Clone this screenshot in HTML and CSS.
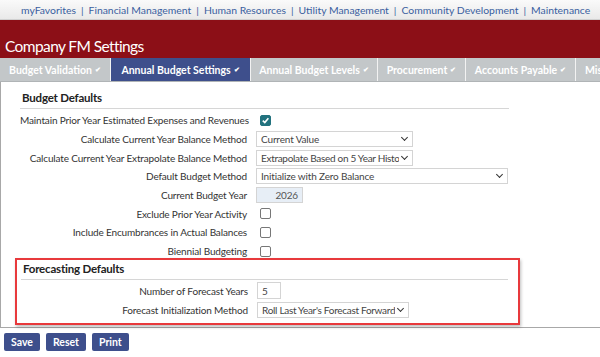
FILE: index.html
```html
<!DOCTYPE html>
<html lang="en">
<head>
    <meta charset="UTF-8">
    <title>Company FM Settings</title>
    <link rel="stylesheet" href="styles.css">
</head>
<body>
    <div class="top-nav">
        <a href="#">myFavorites</a><span class="sep">|</span>
        <a href="#">Financial Management</a><span class="sep">|</span>
        <a href="#">Human Resources</a><span class="sep">|</span>
        <a href="#">Utility Management</a><span class="sep">|</span>
        <a href="#">Community Development</a><span class="sep">|</span>
        <a href="#">Maintenance</a>
    </div>

    <div class="page-header">
        <h1>Company FM Settings</h1>
    </div>

    <div class="tabs">
        <div class="tab t1">Budget Validation <span class="tick">&#10004;</span></div>
        <div class="tab t2 active">Annual Budget Settings <span class="tick">&#10004;</span></div>
        <div class="tab t3">Annual Budget Levels <span class="tick">&#10004;</span></div>
        <div class="tab t4">Procurement <span class="tick">&#10004;</span></div>
        <div class="tab t5">Accounts Payable <span class="tick">&#10004;</span></div>
        <div class="tab t6">Miscellaneous</div>
    </div>

    <div class="content">
        <div class="section">
            <div class="section-title">Budget Defaults</div>
            <div class="row">
                <label>Maintain Prior Year Estimated Expenses and Revenues</label>
                <span class="check checked"><svg width="9" height="9" viewBox="0 0 10 10"><path d="M2 5.2 L4.2 7.3 L8.2 2.4" fill="none" stroke="#fff" stroke-width="1.8"/></svg></span>
            </div>
            <div class="row">
                <label>Calculate Current Year Balance Method</label>
                <div class="select w157"><span>Current Value</span><i class="chev"></i></div>
            </div>
            <div class="row">
                <label>Calculate Current Year Extrapolate Balance Method</label>
                <div class="select w157"><span class="tight">Extrapolate Based on 5 Year Histo</span><i class="chev"></i></div>
            </div>
            <div class="row">
                <label>Default Budget Method</label>
                <div class="select w252"><span>Initialize with Zero Balance</span><i class="chev"></i></div>
            </div>
            <div class="row">
                <label>Current Budget Year</label>
                <div class="input year">2026</div>
            </div>
            <div class="row">
                <label>Exclude Prior Year Activity</label>
                <span class="check"></span>
            </div>
            <div class="row">
                <label>Include Encumbrances in Actual Balances</label>
                <span class="check"></span>
            </div>
            <div class="row">
                <label>Biennial Budgeting</label>
                <span class="check"></span>
            </div>
        </div>

        <div class="section forecast">
            <div class="section-title">Forecasting Defaults</div>
            <div class="row">
                <label>Number of Forecast Years</label>
                <div class="input small">5</div>
            </div>
            <div class="row">
                <label>Forecast Initialization Method</label>
                <div class="select w151"><span class="tight">Roll Last Year's Forecast Forward</span><i class="chev"></i></div>
            </div>
        </div>
    </div>

    <div class="actions">
        <button>Save</button>
        <button>Reset</button>
        <button>Print</button>
    </div>
</body>
</html>
```

FILE: styles.css
```css
* {
    margin: 0;
    padding: 0;
    box-sizing: border-box;
}

body {
    font-family: Lato, "Open Sans", sans-serif;
    font-size: 10px;
    color: #333;
    background-color: #fff;
    width: 600px;
    height: 357px;
    overflow: hidden;
}

.top-nav {
    height: 20px;
    padding-left: 21px;
    background: linear-gradient(#fafafa, #e9e9e9);
    border-bottom: 1px solid #d0d0d0;
    display: flex;
    align-items: center;
    font-size: 10.4px;
    white-space: nowrap;
}

.top-nav a {
    color: #3a5fa0;
    text-decoration: none;
}

.top-nav .sep {
    color: #3a5fa0;
    margin: 0 5px;
}

.page-header {
    height: 38px;
    background-color: #8c0f17;
    display: flex;
    align-items: flex-end;
    padding: 0 0 3px 5px;
}

.page-header h1 {
    color: #fff;
    font-weight: normal;
    font-size: 15.5px;
    letter-spacing: -0.6px;
}

.tabs {
    height: 24px;
    display: flex;
    background-color: #c3c7c9;
    border-bottom: 1px solid #b0b4b6;
    white-space: nowrap;
    overflow: hidden;
}

.tab {
    flex: none;
    display: flex;
    align-items: center;
    justify-content: center;
    color: #fff;
    font-weight: bold;
    font-size: 10.5px;
    border-right: 1px solid #f2f2f2;
}

.tab .tick {
    font-size: 7px;
    margin-left: 3px;
}

.tab.active {
    background-color: #3e4f8c;
}

.t1 { width: 111px; }
.t2 { width: 140px; }
.t3 { width: 127px; }
.t4 { width: 88px; }
.t5 { width: 110px; }
.t6 { width: 60px; justify-content: flex-start; padding-left: 9px; border-right: none; }

.content {
    height: 246px;
    border-left: 1px solid #a8a8a8;
    border-bottom: 1px solid #a8a8a8;
    padding: 9px 0 0 19px;
}

.section {
    width: 489px;
}

.section-title {
    font-weight: bold;
    font-size: 11.5px;
    letter-spacing: -0.2px;
    color: #222;
    padding-left: 2px;
    height: 18px;
    border-bottom: 1px solid #d6d6d6;
    margin-bottom: 2px;
}

.row {
    display: flex;
    align-items: center;
    height: 18.7px;
}

.row label {
    width: 227px;
    text-align: right;
    font-size: 10px;
    letter-spacing: -0.15px;
    color: #333;
    white-space: nowrap;
    margin-right: 9px;
}

.check {
    width: 11px;
    height: 11px;
    margin-left: 4px;
    border: 1px solid #777;
    border-radius: 2px;
    background-color: #fff;
    display: flex;
    align-items: center;
    justify-content: center;
}

.check.checked {
    background-color: #22727e;
    border-color: #22727e;
}

.select,
.input {
    height: 16px;
    border: 1px solid #d4d4d4;
    background-color: #fff;
    font-size: 10px;
    letter-spacing: -0.15px;
    color: #444;
    display: flex;
    align-items: center;
    padding: 0 4px;
    white-space: nowrap;
    overflow: hidden;
}

.select span {
    flex: 1;
    overflow: hidden;
}

.select .tight {
    letter-spacing: -0.3px;
}

.chev {
    flex: none;
    width: 5px;
    height: 5px;
    border-right: 1.5px solid #333;
    border-bottom: 1.5px solid #333;
    transform: rotate(45deg);
    margin: -3px 1px 0 3px;
}

.w157 { width: 157px; }
.w252 { width: 252px; }
.w151 { width: 152px; }

.input.year {
    width: 47px;
    background-color: #e7eef6;
    justify-content: flex-end;
    color: #555;
}

.input.small {
    width: 24px;
    height: 17px;
}

.forecast {
    margin: -3px 0 0 -5px;
    width: 505px;
    border: 2px solid #e8393c;
    box-shadow: 1px 2px 3px rgba(0, 0, 0, 0.25);
    padding: 2px 10px 4px 4px;
}

.actions {
    display: flex;
    gap: 6px;
    padding: 5px 0 0 4px;
}

.actions button {
    background-color: #3e4f8c;
    color: #fff;
    border: none;
    border-radius: 2px;
    font-family: Lato, sans-serif;
    font-weight: bold;
    font-size: 10.5px;
    height: 18px;
    padding: 0 7px;
}
```
